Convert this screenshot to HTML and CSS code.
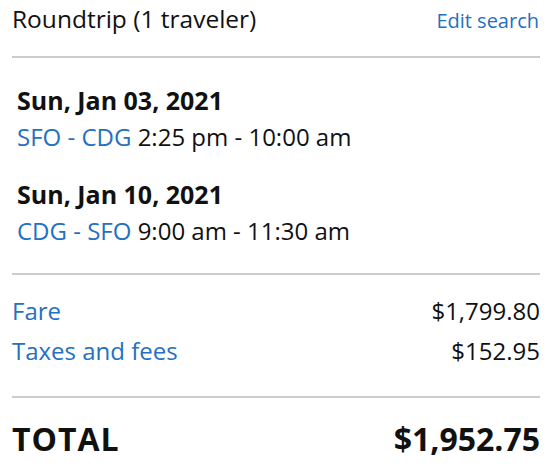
FILE: index.html
```html
<!DOCTYPE html>
<html lang="en">
<head>
    <meta charset="UTF-8">
    <meta name="viewport" content="width=device-width, initial-scale=1.0">
    <title>Trip summary</title>
    <link rel="stylesheet" href="styles.css">
</head>
<body>
    <div class="summary">
        <div class="header">
            <span class="title">Roundtrip (1 traveler)</span>
            <a class="link edit" href="#">Edit search</a>
        </div>

        <div class="flights">
            <div class="flight">
                <div class="flight-date">Sun, Jan 03, 2021</div>
                <div class="flight-route"><a class="link" href="#">SFO - CDG</a> 2:25 pm - 10:00 am</div>
            </div>
            <div class="flight">
                <div class="flight-date">Sun, Jan 10, 2021</div>
                <div class="flight-route"><a class="link" href="#">CDG - SFO</a> 9:00 am - 11:30 am</div>
            </div>
        </div>

        <div class="prices">
            <div class="price-row">
                <a class="link" href="#">Fare</a>
                <span>$1,799.80</span>
            </div>
            <div class="price-row">
                <a class="link" href="#">Taxes and fees</a>
                <span>$152.95</span>
            </div>
        </div>

        <div class="total">
            <span class="total-label">TOTAL</span>
            <span>$1,952.75</span>
        </div>
    </div>
</body>
</html>
```

FILE: styles.css
```css
body {
    margin: 0;
    font-family: "Open Sans", Arial, sans-serif;
    color: #111;
    background-color: #fff;
}
.summary {
    padding: 3px 14px 0 12px;
}
.link {
    color: #2470c2;
    text-decoration: none;
}
.header {
    display: flex;
    justify-content: space-between;
    align-items: baseline;
    height: 32px;
    padding-bottom: 21px;
    border-bottom: 2px solid #ccc;
}
.title {
    font-size: 24.5px;
    line-height: 32px;
}
.edit {
    font-size: 20px;
    margin-right: 1px;
}
.flights {
    padding: 26px 0 26px 5px;
    border-bottom: 2px solid #ccc;
}
.flight + .flight {
    margin-top: 25px;
}
.flight-date {
    font-size: 25px;
    font-weight: bold;
    line-height: 32px;
}
.flight-route {
    font-size: 24px;
    line-height: 32px;
    margin-top: 5px;
}
.prices {
    padding: 20px 0 29px;
    border-bottom: 2px solid #ccc;
}
.price-row {
    display: flex;
    justify-content: space-between;
    font-size: 24px;
    line-height: 32px;
}
.price-row + .price-row {
    margin-top: 8px;
}
.total {
    display: flex;
    justify-content: space-between;
    padding-top: 21px;
    font-size: 32px;
    font-weight: bold;
    line-height: 40px;
}
.total-label {
    letter-spacing: 1px;
}
```
